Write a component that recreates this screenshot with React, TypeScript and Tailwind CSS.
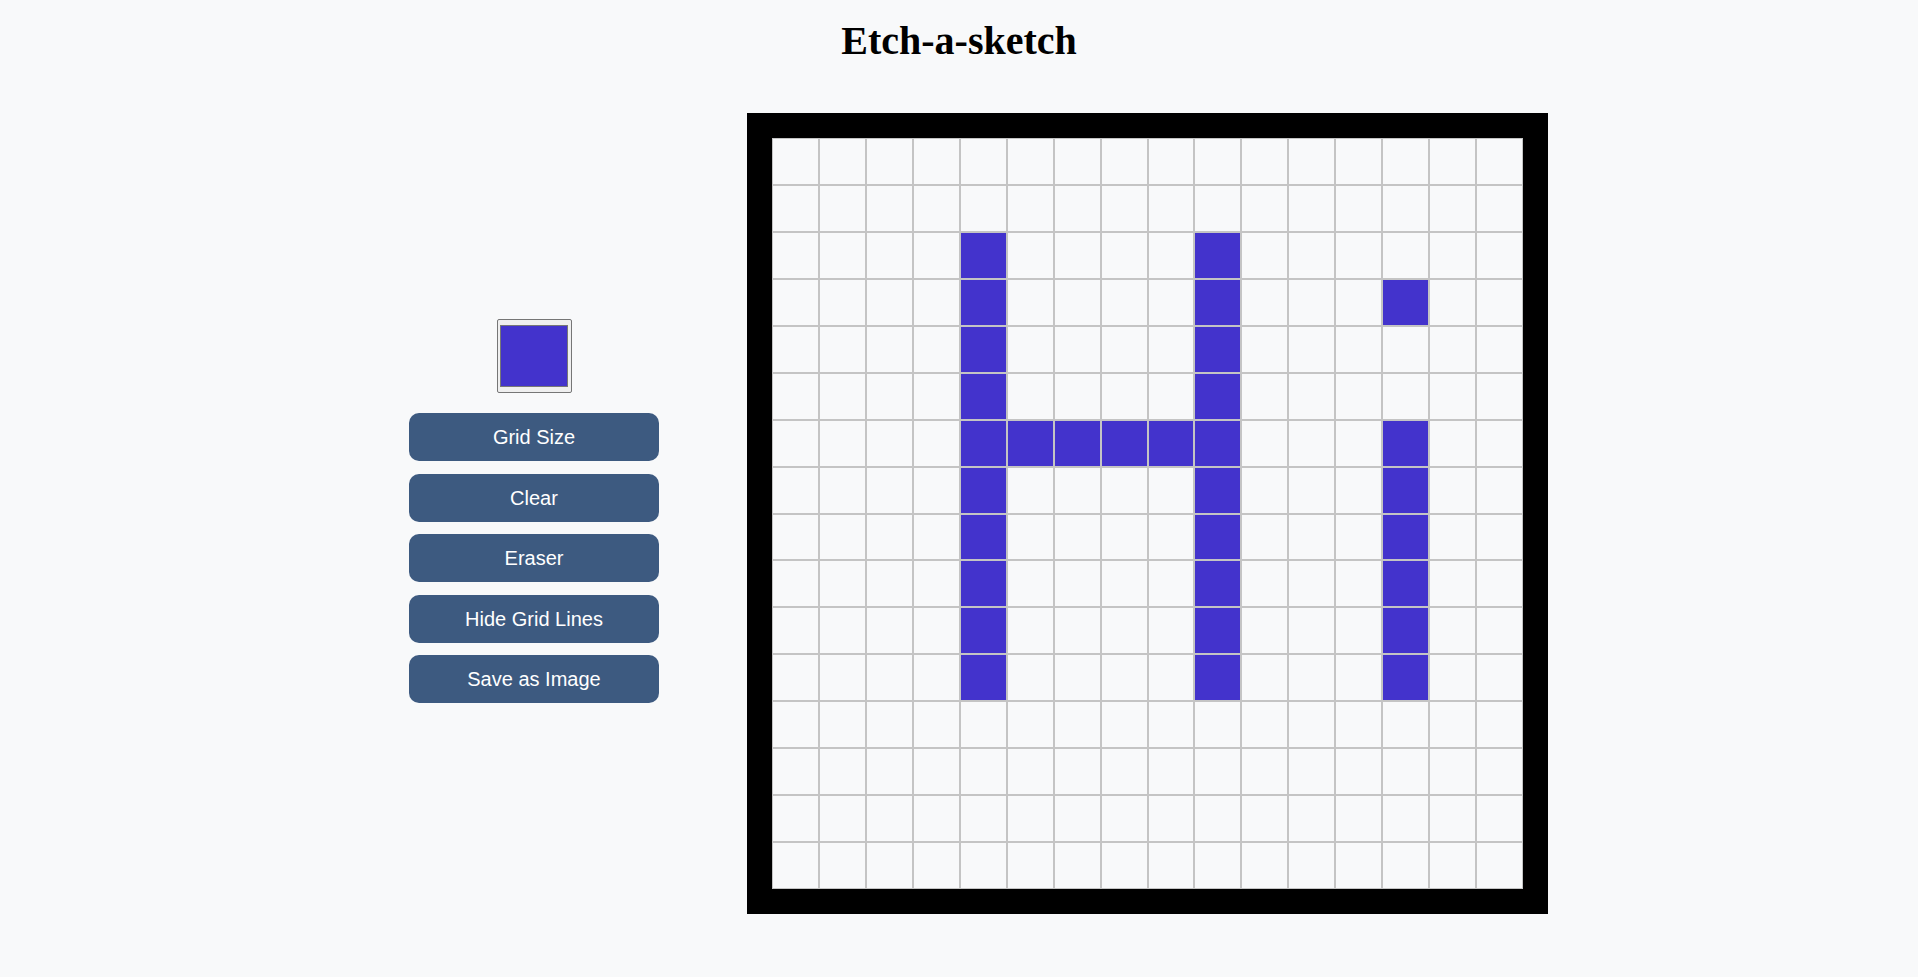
import React from "react";

const BLUE = "#4333cc";

const filled = new Set<string>();
for (let r = 2; r <= 11; r++) {
  filled.add(`${r}-4`);
  filled.add(`${r}-9`);
}
for (let c = 4; c <= 9; c++) filled.add(`6-${c}`);
filled.add(`3-13`);
for (let r = 6; r <= 11; r++) filled.add(`${r}-13`);

const buttons = ["Grid Size", "Clear", "Eraser", "Hide Grid Lines", "Save as Image"];

export default function App() {
  const cells: React.ReactNode[] = [];
  for (let r = 0; r < 16; r++) {
    for (let c = 0; c < 16; c++) {
      const on = filled.has(`${r}-${c}`);
      cells.push(
        <div
          key={`${r}-${c}`}
          className={`border border-[#c4c4c4] ${on ? "bg-[#4333cc]" : "bg-[#f8f9fa]"}`}
        />
      );
    }
  }
  return (
    <div className="min-h-screen w-full bg-[#f8f9fa] pt-[17px]">
      <h1 className="text-center text-[40px] font-bold leading-[normal] text-black [font-family:'Liberation_Serif','Times_New_Roman',serif]">
        Etch-a-sketch
      </h1>
      <div className="mt-[49px] flex items-start pl-[409px]">
        <div className="mt-[206px] flex w-[250px] flex-col items-center">
          <div className="h-[74px] w-[75px] rounded-[2px] border border-[#767676] bg-[#efefef] pb-[5px] pl-[2px] pr-[3px] pt-[5px]">
            <div className="h-full w-full border border-[#777777]" style={{ backgroundColor: BLUE }} />
          </div>
          <div className="mt-[20px] flex w-full flex-col gap-[12.5px]">
            {buttons.map((b) => (
              <button
                key={b}
                className="flex h-[48px] w-[250px] items-center justify-center rounded-[10px] bg-[#3d5a80] text-[20px] text-white [font-family:'Liberation_Sans',Arial,sans-serif]"
              >
                {b}
              </button>
            ))}
          </div>
        </div>
        <div className="ml-[88px] h-[801px] w-[801px] border-[25px] border-black bg-[#f8f9fa]">
          <div className="grid h-full w-full grid-cols-[repeat(16,1fr)] grid-rows-[repeat(16,1fr)]">
            {cells}
          </div>
        </div>
      </div>
    </div>
  );
}
